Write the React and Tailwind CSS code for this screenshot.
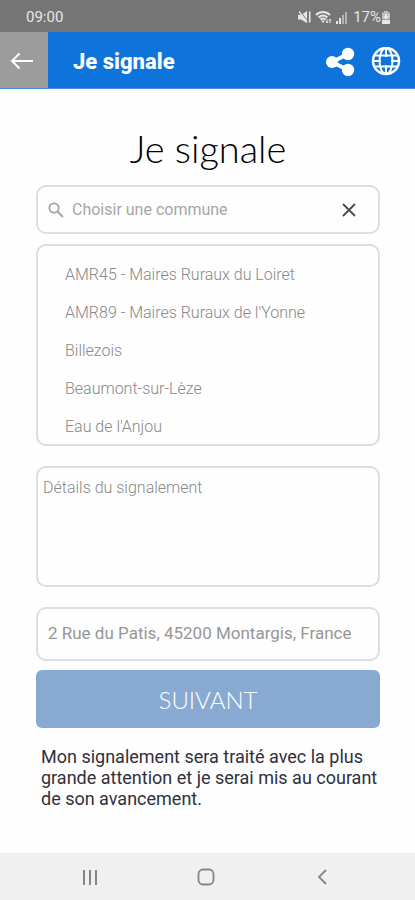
import { useState } from 'react';

const COMMUNES = [
    "AMR45 - Maires Ruraux du Loiret",
    "AMR89 - Maires Ruraux de l'Yonne",
    "Billezois",
    "Beaumont-sur-Lèze",
    "Eau de l'Anjou",
];

const StatusBar = () => (
    <div className="flex h-8 items-center justify-between bg-[#757575] pl-[26px] pr-6 pt-[2px] text-[#e6e6e6]">
        <span className="text-[15px] leading-5">09:00</span>
        <div className="flex items-center gap-1">
            <svg width="13" height="14" viewBox="0 0 13 14" aria-hidden="true">
                <path d="M0 5h3l6-4v12L3 9.500H0z" fill="currentColor" />
                <path d="M2 1l8 11" stroke="#757575" strokeWidth="1.200" />
                <path d="M1 1.500l8 10.500" stroke="currentColor" strokeWidth="1.300" fill="none" />
                <path d="M11.700 1.500v11" stroke="currentColor" strokeWidth="1.600" />
            </svg>
            <svg width="17" height="14" viewBox="0 0 17 14" fill="none" stroke="currentColor" aria-hidden="true">
                <path d="M1 5C5 1 11 1 15 5M3.500 7.500c3-2.700 6-2.700 9 0M5.500 9.500c1.700-1.400 3.300-1.400 5 0" strokeWidth="1.900" />
                <path d="M6 10.500h4L8 13z" fill="currentColor" stroke="none" />
                <path d="M12 9v4M11 11.500l1 1.500 1-1.500M15 13V9M14 10.500L15 9l1 1.500" strokeWidth="1" />
            </svg>
            <svg width="12" height="13" viewBox="0 0 12 13" fill="currentColor" aria-hidden="true">
                <path d="M0 10h2v3H0zM3 7h2v6H3z" />
                <path d="M6 4h2v9H6zM9 1h2v12H9z" opacity=".55" />
            </svg>
            <div className="flex items-center">
                <span className="pl-px text-[15px] leading-5">17%</span>
                <svg width="10" height="13" viewBox="0 0 10 13" fill="currentColor" aria-hidden="true">
                    <path d="M3 0h4v1.500h2v7H1v-7h2z" opacity=".65" />
                    <path d="M4 3h2v2h2L5 9 2 5h2zM1 9h8v4H1z" />
                </svg>
            </div>
        </div>
    </div>
);

const Header = () => (
    <header className="flex h-[57px] items-stretch border-b border-[#4d8fd6] bg-[#0e74dc] text-white">
        <button aria-label="Retour" className="flex w-12 items-center justify-center bg-[#9c9c9c] pr-[5px] pt-[2px]">
            <svg width="24" height="18" viewBox="0 0 24 18" fill="none" stroke="currentColor" strokeWidth="2" aria-hidden="true">
                <path d="M23 9H2M9.500 1.500L2 9l7.500 7.500" />
            </svg>
        </button>
        <h2 className="flex flex-1 items-center pl-[25px] pt-1 text-[22px] font-extrabold leading-7">Je signale</h2>
        <div className="flex items-center gap-4 pr-[14px] pt-[3px]">
            <button aria-label="Partager">
                <svg width="30" height="30" viewBox="0 0 30 30" aria-hidden="true">
                    <path d="M23 7L7 15l16 8" fill="none" stroke="currentColor" strokeWidth="4" />
                    <g fill="currentColor">
                        <circle cx="7" cy="15" r="6" />
                        <circle cx="23" cy="7" r="6.200" />
                        <circle cx="23" cy="23" r="6.200" />
                    </g>
                </svg>
            </button>
            <button aria-label="Langue">
                <svg width="30" height="30" viewBox="0 0 30 30" fill="none" stroke="currentColor" strokeWidth="2" aria-hidden="true">
                    <circle cx="15" cy="14" r="13" strokeWidth="2.500" />
                    <ellipse cx="15" cy="14" rx="6.500" ry="13" />
                    <path d="M2 14h26M15 1v26M4 8.500h22M4 19.500h22" />
                    <path d="M10 10h10v8H10z" fill="#0e74dc" stroke="none" />
                    <path d="M8.500 8.500h13v11h-13z" strokeWidth="1" />
                </svg>
            </button>
        </div>
    </header>
);

const NavBar = () => (
    <nav className="flex h-[47px] items-center justify-around bg-[#f0f0f0] pl-8 pr-[35px] text-[#868686]">
        <button aria-label="Applications récentes">
            <svg width="18" height="18" viewBox="0 0 18 18" stroke="currentColor" strokeWidth="2" aria-hidden="true">
                <path d="M3 2v15M9 2v15M15 2v15" />
            </svg>
        </button>
        <button aria-label="Accueil">
            <svg width="18" height="18" viewBox="0 0 18 18" fill="none" stroke="currentColor" strokeWidth="1.800" aria-hidden="true">
                <rect x="1.500" y="1.500" width="15" height="15" rx="4.500" />
            </svg>
        </button>
        <button aria-label="Précédent">
            <svg width="18" height="18" viewBox="0 0 18 18" fill="none" stroke="currentColor" strokeWidth="1.800" aria-hidden="true">
                <path d="M13 2L6 9l7 7" />
            </svg>
        </button>
    </nav>
);

export default function App() {
    const [commune, setCommune] = useState('');
    const [details, setDetails] = useState('');
    const [address, setAddress] = useState('2 Rue du Patis, 45200 Montargis, France');

    return (
        <div className="flex min-h-screen flex-col bg-[#fefefe] font-[Roboto,sans-serif]">
            <StatusBar />
            <Header />

            <main className="flex flex-1 flex-col pl-9 pr-[35px]">
                <h1 className="pt-[38px] text-center font-[Lato,sans-serif] text-[38px] font-light leading-[42px] text-black">
                    Je signale
                </h1>

                <div className="mt-4 flex h-[49px] items-center rounded-[10px] border-2 border-[#dedede] pl-[10px] pr-[22px]">
                    <svg width="16" height="16" viewBox="0 0 16 16" fill="none" stroke="#a3a3a3" strokeWidth="1.800" aria-hidden="true">
                        <circle cx="6" cy="6" r="4.700" />
                        <path d="M9.500 9.500l5.500 5.500" />
                    </svg>
                    <input
                        type="text"
                        aria-label="Commune"
                        placeholder="Choisir une commune"
                        value={commune}
                        onChange={(e) => setCommune(e.target.value)}
                        className="min-w-0 flex-1 pl-2 text-[16px] text-[#8e8e8e] outline-none placeholder:text-[#a6a6a6]"
                    />
                    <button aria-label="Effacer" onClick={() => setCommune('')}>
                        <svg width="14" height="14" viewBox="0 0 14 14" stroke="#4a4a4a" strokeWidth="1.800" aria-hidden="true">
                            <path d="M1 1l12 12M13 1L1 13" />
                        </svg>
                    </button>
                </div>

                <ul className="mt-[10px] h-[202px] overflow-hidden rounded-[10px] border-2 border-[#dedede] pl-[27px] pt-[10px]">
                    {COMMUNES.map((name) => (
                        <li key={name}>
                            <button
                                onClick={() => setCommune(name)}
                                className="flex h-[38px] w-full items-center text-[16px] font-light text-[#888888]"
                            >
                                {name}
                            </button>
                        </li>
                    ))}
                </ul>

                <textarea
                    aria-label="Détails du signalement"
                    placeholder="Détails du signalement"
                    value={details}
                    onChange={(e) => setDetails(e.target.value)}
                    className="mt-5 h-[121px] w-full resize-none rounded-[10px] border-2 border-[#dedede] px-[5px] py-2 text-[16px] font-light leading-6 outline-none placeholder:text-[#888888]"
                />

                <input
                    type="text"
                    aria-label="Adresse"
                    value={address}
                    onChange={(e) => setAddress(e.target.value)}
                    className="mt-5 h-[54px] w-full rounded-[10px] border-2 border-[#dedede] px-[10px] pb-[2px] text-[17px] text-[#969696] outline-none"
                />

                <button className="mt-[9px] h-[58px] w-full rounded-md bg-[#88aad2] pt-px font-[Lato,sans-serif] text-[24px] font-light text-white">
                    SUIVANT
                </button>

                <p className="-mr-2 pb-6 pl-[5px] pt-[18px] text-[18px] leading-[21px] text-[#30303c]">
                    Mon signalement sera traité avec la plus grande attention et je serai mis au courant de son avancement.
                </p>
            </main>

            <NavBar />
        </div>
    );
}
